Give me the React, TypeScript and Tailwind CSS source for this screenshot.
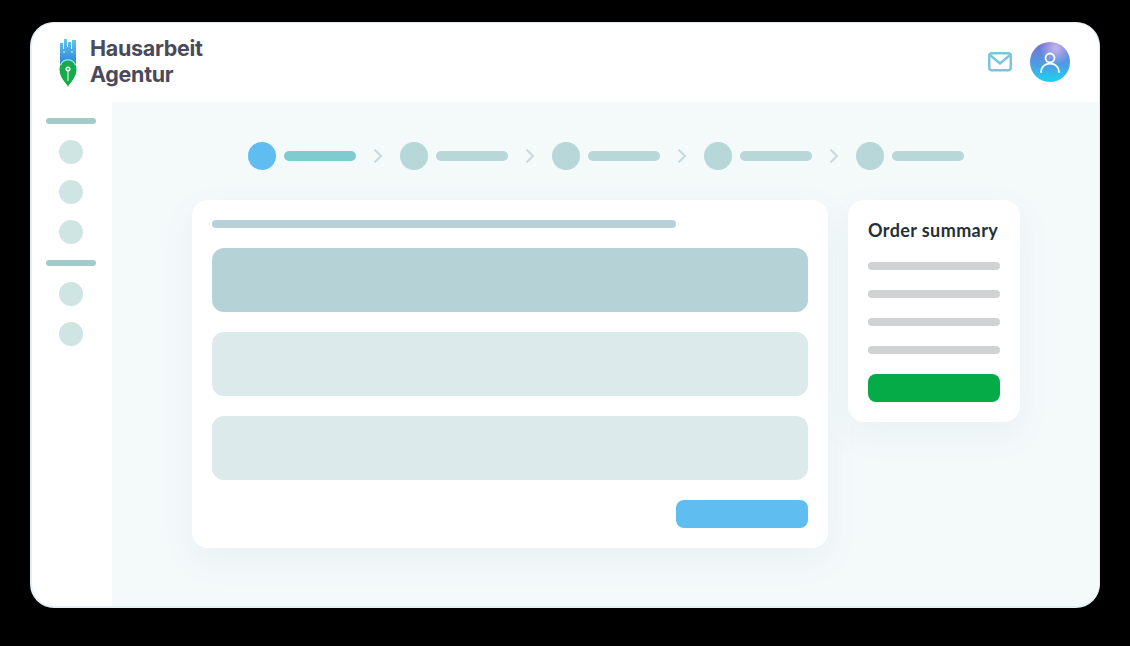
const steps = [0, 1, 2, 3, 4];

const SideDot = () => <div className="w-6 h-6 rounded-full bg-[#cfe5e3]" />;

const SideBar = () => <div className="w-[50px] h-1.5 rounded-full bg-[#a3cbcc]" />;

const Logo = () => (
   <svg width="18" height="48" viewBox="0 0 18 48" fill="none">
      <defs>
         <linearGradient id="logoBlue" x1="0" y1="0" x2="0" y2="1">
            <stop offset="0" stopColor="#62c8e8" />
            <stop offset="1" stopColor="#2a80dc" />
         </linearGradient>
      </defs>
      <path d="M1 4h3v6h1V0h3v8h1V3h3v7h1V1h4v25H1V4z" fill="url(#logoBlue)" />
      <circle cx="5" cy="13" r="0.800" fill="#fff" />
      <circle cx="13" cy="13" r="0.800" fill="#fff" />
      <path d="M9 48C8 44 0.500 40 0.500 30a8.500 8.500 0 0 1 17 0C17.500 40 10 44 9 48z" fill="#12ac4b" />
      <path d="M1.500 26a8 8 0 0 1 15 0" stroke="#9ce8dc" strokeWidth="1.200" />
      <circle cx="9" cy="30" r="2.500" fill="#fff" />
      <circle cx="9" cy="30" r="1" fill="#12ac4b" />
      <path d="M9 32v10" stroke="#fff" strokeWidth="1" />
   </svg>
);

export default function App() {
   return (
      <div className="w-[1130px] h-[646px] bg-black pt-[22px] pl-[30px] font-['Lato',sans-serif]">
         <div className="w-[1070px] h-[586px] rounded-[24px] overflow-hidden bg-white flex flex-col border-l-2 border-t border-b-2 border-r border-[#dff0f6]">
            <header className="h-[79px] shrink-0 flex items-center justify-between pl-[27px] pr-[29px]">
               <div className="flex items-center gap-[13px]">
                  <Logo />
                  <div className="-mt-1 text-[21.5px] leading-[26px] font-bold text-[#4a4a58] font-['Inter',sans-serif] tracking-[-0.3px]">
                     <div>Hausarbeit</div>
                     <div>Agentur</div>
                  </div>
               </div>
               <div className="-mt-0.5 flex items-center gap-[18px]">
                  <svg width="24" height="20" viewBox="0 0 24 20" fill="none" stroke="#7cc6dc" strokeWidth="2.500" strokeLinejoin="round">
                     <rect x="1.250" y="1.250" width="21.500" height="17" rx="2.500" />
                     <path d="M2 3l10 8.500L22 3" />
                  </svg>
                  <div className="w-10 h-10 rounded-full bg-[radial-gradient(circle_at_65%_15%,#c3b6ec_0%,transparent_38%),linear-gradient(to_bottom,#7a6fd0,#4f9be4_55%,#1bd3ef)] flex items-center justify-center">
                     <svg width="24" height="24" viewBox="0 0 24 24" fill="none" stroke="#fff" strokeWidth="1.800" strokeLinecap="round">
                        <circle cx="12" cy="8" r="4.500" />
                        <path d="M3 22c0-5 4-8.500 9-8.500s9 3.500 9 8.500" />
                     </svg>
                  </div>
               </div>
            </header>
            <div className="flex-1 flex min-h-0">
               <aside className="w-[80px] shrink-0 flex flex-col items-center pt-[16px] pr-[2px]">
                  <SideBar />
                  <div className="flex flex-col gap-4 mt-4 mb-4">
                     <SideDot />
                     <SideDot />
                     <SideDot />
                  </div>
                  <SideBar />
                  <div className="flex flex-col gap-4 mt-4">
                     <SideDot />
                     <SideDot />
                  </div>
               </aside>
               <main className="flex-1 bg-[#f4f9fa] pl-[80px] pt-[40px]">
                  <div className="flex items-center pl-[56px] h-7">
                     {steps.map((step) => (
                        <div key={step} className="flex items-center">
                           <div className={`w-7 h-7 rounded-full ${step === 0 ? 'bg-[#5fbdef]' : 'bg-[#b8d7d9]'}`} />
                           <div className={`w-[72px] h-2.5 ml-2 rounded-full ${step === 0 ? 'bg-[#80cbd0]' : 'bg-[#b8d7d9]'}`} />
                           {step < 4 && (
                              <svg width="44" height="16" viewBox="0 0 44 16" fill="none" stroke="#c8dcdc" strokeWidth="2.200">
                                 <path d="M18.500 1.500L25 8l-6.500 6.500" />
                              </svg>
                           )}
                        </div>
                     ))}
                  </div>
                  <div className="flex items-start gap-5 mt-[30px]">
                     <section className="w-[636px] h-[348px] bg-white rounded-2xl p-5 flex flex-col shadow-[0_12px_32px_rgba(120,150,150,0.08)]">
                        <div className="w-[464px] h-2 rounded-full bg-[#b8d0d8]" />
                        <div className="h-16 mt-5 rounded-xl bg-[#b5d2d6]" />
                        <div className="h-16 mt-5 rounded-xl bg-[#dceaeb]" />
                        <div className="h-16 mt-5 rounded-xl bg-[#dceaeb]" />
                        <div className="self-end w-[132px] h-7 mt-5 rounded-lg bg-[#5fbdef]" />
                     </section>
                     <section className="w-[172px] h-[222px] bg-white rounded-2xl px-5 pt-[19px] flex flex-col shadow-[0_12px_32px_rgba(120,150,150,0.08)]">
                        <h2 className="text-[18px] leading-[22px] font-bold text-[#23303a] whitespace-nowrap tracking-[0.4px]">Order summary</h2>
                        <div className="flex flex-col gap-5 mt-[21px]">
                           <div className="h-2 rounded-full bg-[#d0d2d3]" />
                           <div className="h-2 rounded-full bg-[#d0d2d3]" />
                           <div className="h-2 rounded-full bg-[#d0d2d3]" />
                           <div className="h-2 rounded-full bg-[#d0d2d3]" />
                        </div>
                        <div className="h-7 mt-5 rounded-lg bg-[#05ab47]" />
                     </section>
                  </div>
               </main>
            </div>
         </div>
      </div>
   );
}
